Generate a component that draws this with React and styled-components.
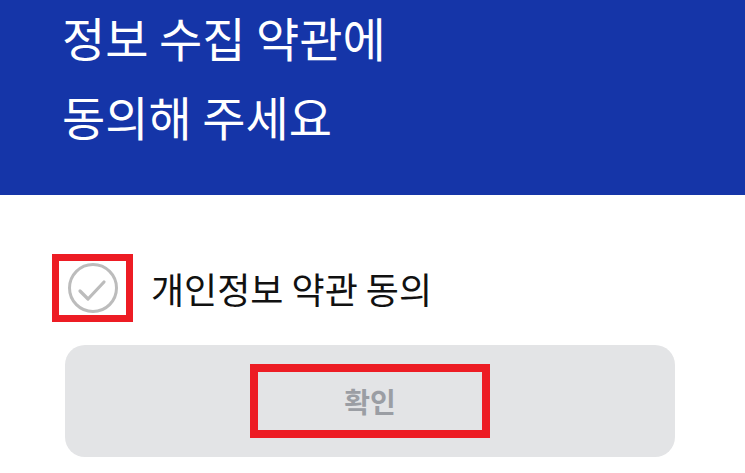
import React, { useState } from 'react'
import styled, { createGlobalStyle } from 'styled-components'

const GlobalStyle = createGlobalStyle`
    html, body {
        margin: 0;
        padding: 0;
        background: #ffffff;
    }
    body {
        font-family: 'Noto Sans CJK KR', 'Noto Sans', sans-serif;
    }
`

const Page = styled.div`
    width: 745px;
    height: 473px;
    overflow: hidden;
    background: #ffffff;
`

const Header = styled.div`
    height: 195px;
    background-color: #1535a8;
    padding-left: 62px;
    box-sizing: border-box;
`

const Title = styled.h1`
    margin: 0;
    color: #ffffff;
    font-size: 47px;
    font-weight: 400;
    line-height: 79px;
    position: relative;
    top: -3px;
`

const Body = styled.div`
    padding-top: 59px;
`

const AgreeRow = styled.label`
    display: flex;
    align-items: center;
    gap: 18px;
    padding-left: 52px;
    cursor: pointer;
`

const Highlight = styled.div`
    border: ${(props) => props.thick}px solid #ed1c24;
    display: flex;
    align-items: center;
    justify-content: center;
    box-sizing: border-box;
    width: ${(props) => props.w}px;
    height: ${(props) => props.h}px;
`

const CheckCircle = styled.svg`
    width: 52px;
    height: 52px;
    display: block;
`

const AgreeText = styled.span`
    font-size: 36px;
    color: #111111;
    line-height: 1;
`

const ButtonWrap = styled.div`
    padding: 23px 0 0 65px;
`

const ConfirmButton = styled.button`
    width: 610px;
    height: 112px;
    border: none;
    border-radius: 20px;
    background-color: #e3e4e6;
    display: flex;
    align-items: center;
    justify-content: center;
    padding: 0;
    font-family: inherit;
    cursor: default;
`

const ConfirmText = styled.span`
    font-size: 28px;
    font-weight: 700;
    color: #9b9ea4;
`

export default function App() {
    const [checked, setChecked] = useState(false)

    return (
        <Page>
            <GlobalStyle />
            <Header>
                <Title>
                    정보 수집 약관에
                    <br />
                    동의해 주세요
                </Title>
            </Header>
            <Body>
                <AgreeRow onClick={() => setChecked(!checked)}>
                    <Highlight w={81} h={68} thick={7}>
                        <CheckCircle viewBox="0 0 52 52">
                            <circle
                                cx="26"
                                cy="26"
                                r="23.5"
                                fill="none"
                                stroke={checked ? '#1535a8' : '#bcbcbc'}
                                strokeWidth="3"
                            />
                            <path
                                d="M13 29 L21 37 L37 20"
                                fill="none"
                                stroke={checked ? '#1535a8' : '#bcbcbc'}
                                strokeWidth="3.2"
                                strokeLinecap="round"
                                strokeLinejoin="round"
                            />
                        </CheckCircle>
                    </Highlight>
                    <AgreeText>개인정보 약관 동의</AgreeText>
                </AgreeRow>
                <ButtonWrap>
                    <ConfirmButton disabled={!checked}>
                        <Highlight w={240} h={74} thick={8}>
                            <ConfirmText>확인</ConfirmText>
                        </Highlight>
                    </ConfirmButton>
                </ButtonWrap>
            </Body>
        </Page>
    )
}
